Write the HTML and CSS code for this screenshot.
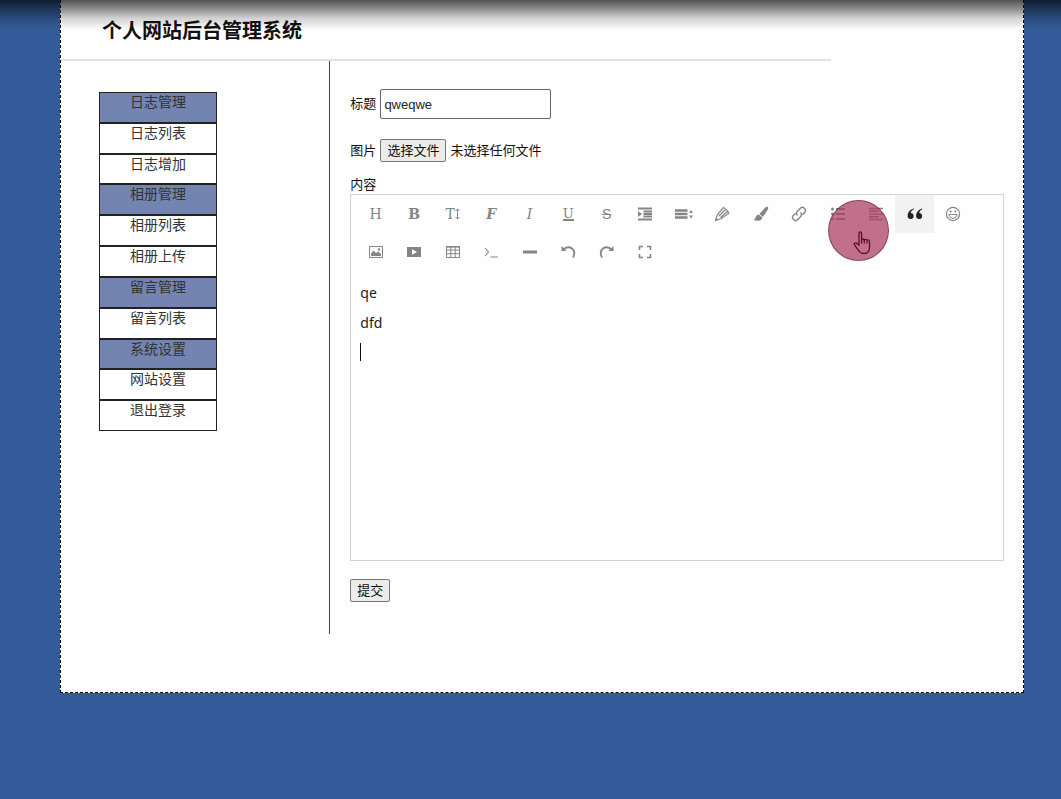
FILE: index.html
```html
<!DOCTYPE html>
<html lang="zh-CN">
<head>
<meta charset="utf-8">
<title>个人网站后台管理系统</title>
<link rel="stylesheet" href="styles.css">
</head>
<body>
<div class="top-shade"></div>
<div class="page">
  <header class="header"><h1 class="title">个人网站后台管理系统</h1></header>
  <div class="columns">
    <nav class="sidebar">
      <ul class="menu">
        <li class="menu-item menu-group">日志管理</li>
        <li class="menu-item"><a href="#">日志列表</a></li>
        <li class="menu-item"><a href="#">日志增加</a></li>
        <li class="menu-item menu-group">相册管理</li>
        <li class="menu-item"><a href="#">相册列表</a></li>
        <li class="menu-item"><a href="#">相册上传</a></li>
        <li class="menu-item menu-group">留言管理</li>
        <li class="menu-item"><a href="#">留言列表</a></li>
        <li class="menu-item menu-group">系统设置</li>
        <li class="menu-item"><a href="#">网站设置</a></li>
        <li class="menu-item"><a href="#">退出登录</a></li>
      </ul>
    </nav>
    <main class="main">
      <form class="form">
        <div class="row row-title">
          <label for="title">标题</label>
          <input class="text-input" id="title" type="text" value="qweqwe">
        </div>
        <div class="row row-file">
          <label for="file">图片</label>
          <div class="file">
            <span class="button file-button">选择文件</span>
            <span>未选择任何文件</span>
            <input class="file-input" id="file" type="file">
          </div>
        </div>
        <div class="content-label" id="content-label">内容</div>
        <div class="editor">
          <div class="toolbar">
            <button class="tool glyph" type="button" aria-label="标题样式">H</button>
            <button class="tool glyph" type="button" aria-label="加粗"><b>B</b></button>
            <button class="tool glyph" type="button" aria-label="字号">T<svg width="5" height="12" viewBox="0 0 5 12"><path d="M2.500 1v10M.5 3l2-2 2 2M.5 9l2 2 2-2" fill="none" stroke="currentColor"/></svg></button>
            <button class="tool glyph" type="button" aria-label="字体"><b><i>F</i></b></button>
            <button class="tool glyph" type="button" aria-label="斜体"><i>I</i></button>
            <button class="tool glyph" type="button" aria-label="下划线"><span class="under">U</span></button>
            <button class="tool glyph sans" type="button" aria-label="删除线"><s>S</s></button>
            <button class="tool" type="button" aria-label="缩进"><svg class="icon" viewBox="0 0 16 16"><path d="M1 2.500h14M6.500 5.500H15M6.500 8H15M6.500 10.500H15M1 13.500h14" fill="none" stroke="currentColor" stroke-width="1.800"/><path d="M1 5l4 3-4 3z" fill="currentColor"/></svg></button>
            <button class="tool" type="button" aria-label="行高"><svg class="icon wide" viewBox="0 0 20 16"><path d="M1 4.500h12.500M1 8h12.500M1 11.500h12.500" stroke="currentColor" stroke-width="2.600"/><path d="M15 7l2-3 2 3zM15 9.500h4l-2 3z" fill="currentColor"/></svg></button>
            <button class="tool" type="button" aria-label="文字颜色"><svg class="icon" viewBox="0 0 16 16"><path d="M1.500 14.500l2-6 6-7q1.500.5 2 2 2 .2 2.200 2 1 .8 1 2l-7.500 5zM5 10l6.500-6.500M6.500 11.500l7-6" fill="none" stroke="currentColor" stroke-width="1.200"/><path d="M1 15l1-3 2 2z" fill="currentColor"/></svg></button>
            <button class="tool" type="button" aria-label="背景颜色"><svg class="icon" viewBox="0 0 16 16"><path d="M14.800 1q1 .8 0 2.600L10 11 6.500 8 12 1.800q1.600-1.500 2.800-.8zM5.800 8.500l3.500 3q-.8 3.300-4.300 3.300-3 0-4.500-1 2-.5 2.300-2.800.7-2.300 3-2.500z" fill="currentColor"/></svg></button>
            <button class="tool" type="button" aria-label="链接"><svg class="icon" viewBox="0 0 16 16"><g fill="none" stroke="currentColor" stroke-width="1.400"><path d="M6.500 9.500a3 3 0 0 1 0-4.200l2.700-2.900a3 3 0 0 1 4.300 4.300l-2 2"/><path d="M9.500 6.500a3 3 0 0 1 0 4.200l-2.700 2.900a3 3 0 0 1-4.300-4.300l2-2"/></g></svg></button>
            <button class="tool" type="button" aria-label="列表"><svg class="icon" viewBox="0 0 16 16"><path d="M6 3h9M6 8h9M6 13h9" stroke="currentColor" stroke-width="1.800"/><circle cx="2.500" cy="3" r="1.500" fill="currentColor"/><circle cx="2.500" cy="8" r="1.500" fill="currentColor"/><circle cx="2.500" cy="13" r="1.500" fill="currentColor"/></svg></button>
            <button class="tool" type="button" aria-label="对齐"><svg class="icon" viewBox="0 0 16 16"><path d="M1 2.500h14M1 5.200h10M1 8h14M1 10.800h10M1 13.500h14" stroke="currentColor" stroke-width="1.700"/></svg></button>
            <button class="tool active" type="button" aria-label="引用"><svg class="icon" viewBox="0 0 16 16"><path d="M7 3Q4 4.500 3.600 7a3 3 0 1 1-3 3.300Q.4 4.800 6.500 2.500zM15.500 3q-3 1.500-3.400 4a3 3 0 1 1-3 3.300Q8.900 4.800 15 2.500z" fill="currentColor"/></svg></button>
            <button class="tool" type="button" aria-label="表情"><svg class="icon" viewBox="0 0 16 16"><circle cx="8" cy="8" r="6.600" fill="none" stroke="currentColor" stroke-width="1.200"/><path d="M3.800 8.500h8.400Q11.500 12.500 8 12.500T3.800 8.500z" fill="none" stroke="currentColor"/><circle cx="5.700" cy="5.500" r="1" fill="currentColor"/><circle cx="10.300" cy="5.500" r="1" fill="currentColor"/></svg></button>
            <button class="tool" type="button" aria-label="图片"><svg class="icon" viewBox="0 0 16 16"><path d="M1.500 2.500h13v11h-13z" fill="none" stroke="currentColor"/><path d="M3 12V9.500l2.500-3L8 9l2-1.500 3 2.500v2z" fill="currentColor"/><circle cx="11" cy="5.500" r="1.200" fill="currentColor"/></svg></button>
            <button class="tool" type="button" aria-label="视频"><svg class="icon" viewBox="0 0 16 16"><path d="M1 3h14v10H1zM6 5.200v5.600L11 8z" fill="currentColor" fill-rule="evenodd"/></svg></button>
            <button class="tool" type="button" aria-label="表格"><svg class="icon" viewBox="0 0 16 16"><path d="M1.500 2.500h13v11h-13zM1.500 6h13M1.500 9.700h13M5.800 2.500v11M10.200 2.500v11" fill="none" stroke="currentColor"/><path d="M1 2h14v1.600H1z" fill="currentColor"/></svg></button>
            <button class="tool" type="button" aria-label="代码"><svg class="icon" viewBox="0 0 16 16"><path d="M2 4l3.500 4L2 12M7.500 13H15" fill="none" stroke="currentColor" stroke-width="1.100"/></svg></button>
            <button class="tool" type="button" aria-label="分割线"><svg class="icon" viewBox="0 0 16 16"><path d="M1 6.500h14v3H1z" fill="currentColor"/></svg></button>
            <button class="tool" type="button" aria-label="撤销"><svg class="icon" viewBox="0 0 16 16"><path d="M3 5.500Q8 1.500 12 4.500t1 9" fill="none" stroke="currentColor" stroke-width="1.800"/><path d="M1.500 2v5h5z" fill="currentColor"/></svg></button>
            <button class="tool" type="button" aria-label="重做"><svg class="icon" viewBox="0 0 16 16"><path d="M13 5.500Q8 1.500 4 4.500t-1 9" fill="none" stroke="currentColor" stroke-width="1.800"/><path d="M14.500 2v5h-5z" fill="currentColor"/></svg></button>
            <button class="tool" type="button" aria-label="全屏"><svg class="icon" viewBox="0 0 16 16"><path d="M2.500 6V2.500H6M10 2.500h3.500V6M13.500 10v3.500H10M6 13.500H2.500V10" fill="none" stroke="currentColor" stroke-width="1.600"/></svg></button>
            <div class="pointer"><svg width="18" height="24" viewBox="0 0 18 24"><path d="M6 14V2.500Q6 1 7.300 1t1.300 1.500V9q0-1 1.300-1t1.400 1.400q0-1 1.300-1T14 9.800q0-1 1.200-1t1.300 1.500v6.200q0 6-5.500 6-3.500 0-5-2.500L1.500 14q-.8-1.500.5-2t2.500 1zM8.600 9v3.500M11.300 9.500v3M14 10v2.500" fill="none" stroke="currentColor" stroke-width="1.300"/></svg></div>
          </div>
          <div class="editor-body" contenteditable="true" role="textbox" aria-multiline="true" aria-labelledby="content-label">
            <p>qe</p>
            <p>dfd</p>
            <p><span class="caret"></span></p>
          </div>
        </div>
        <button class="button submit" type="submit">提交</button>
      </form>
    </main>
  </div>
</div>
</body>
</html>
```
FILE: styles.css
```css
* { box-sizing: border-box; }

body {
  margin: 0;
  min-height: 100vh;
  background: #345b99;
  color: #111;
  font: 13px/20px "Liberation Sans", "Noto Sans CJK SC", sans-serif;
}

.top-shade {
  position: absolute;
  z-index: 2;
  top: 0;
  left: 0;
  right: 0;
  height: 30px;
  background: linear-gradient(rgba(0, 0, 0, .68), rgba(0, 0, 0, .44) 9px, rgba(0, 0, 0, .18) 18px, transparent);
  pointer-events: none;
}

.page {
  margin: 0 37px 0 60px;
  padding-bottom: 58px;
  background: #fefefe;
  border: 1px dashed #000;
  border-top: 0;
}

.header {
  width: 80%;
  height: 61px;
  padding: 16px 0 0 41px;
  border-bottom: 2px solid #e2e2e2;
}

.title {
  margin: 0;
  font-size: 20px;
  line-height: 30px;
}

.columns { display: flex; }

.sidebar {
  flex: 0 0 28%;
  padding: 31px 0 0 38px;
  border-right: 1px solid #444;
}

.menu {
  display: grid;
  grid-auto-rows: 1fr;
  width: 118px;
  height: 339px;
  margin: 0;
  padding: 0;
  list-style: none;
}

.menu-item {
  border: 1px solid #222;
  background: #fff;
  color: #333;
  font-size: 14px;
  line-height: 19px;
  text-align: center;
}

.menu-item a {
  display: block;
  color: inherit;
  text-decoration: none;
}

.menu-group { background: #7284af; }

.main {
  flex: 1;
  min-width: 0;
  padding: 28px 19px 32px 20px;
}

.row {
  display: flex;
  align-items: center;
  gap: 4px;
}

.row-title { margin-bottom: 20px; }
.row-file { margin-bottom: 13px; }

.text-input {
  width: 171px;
  height: 30px;
  padding: 0 3px;
  border: 1px solid #666;
  border-radius: 2px;
  background: #fff;
  color: #222;
  font: inherit;
}

.file {
  position: relative;
  display: flex;
  align-items: center;
  gap: 4px;
}

.file-input {
  position: absolute;
  inset: 0;
  width: 100%;
  opacity: 0;
}

.button {
  height: 23px;
  padding: 0 6px;
  border: 1px solid #777;
  border-radius: 2px;
  background: #ececec;
  color: #111;
  font: inherit;
}

.file-button { line-height: 21px; }

.content-label { line-height: 19px; }

.editor {
  border: 1px solid #d4d4d4;
  background: #fefefe;
}

.toolbar {
  position: relative;
  display: grid;
  grid-template-columns: repeat(16, 1fr);
  grid-auto-rows: 38px;
  width: 616px;
  max-width: 100%;
  margin-left: 5px;
}

.tool {
  display: flex;
  align-items: center;
  justify-content: center;
  padding: 0;
  border: 0;
  background: none;
  color: #858585;
}

.tool.active {
  background: #f2f2f2;
  color: #222;
}

.glyph { font: 14px/16px "DejaVu Serif", serif; }
.sans { font-family: "Liberation Sans", sans-serif; }

.under {
  border-bottom: 2px solid;
  font: 13px/11px "DejaVu Serif", serif;
}

.icon {
  width: 16px;
  height: 16px;
}

.icon.wide { width: 20px; }

.pointer {
  position: absolute;
  top: 5px;
  left: 472px;
  width: 61px;
  height: 61px;
  padding: 30px 0 0 24px;
  border: 1px solid rgba(90, 40, 55, .6);
  border-radius: 50%;
  background: rgba(172, 64, 100, .75);
  color: #5a1028;
  line-height: 0;
  pointer-events: none;
}

.editor-body {
  display: flex;
  flex-direction: column;
  gap: 10px;
  min-height: 289px;
  padding: 12px 9px;
  outline: 0;
  color: #222;
  font: 14px/20px "Noto Sans", "Noto Sans CJK SC", sans-serif;
}

.editor-body p { margin: 0; }

.caret {
  display: block;
  width: 1px;
  height: 18px;
  background: #111;
}

.submit { margin-top: 18px; }
```
